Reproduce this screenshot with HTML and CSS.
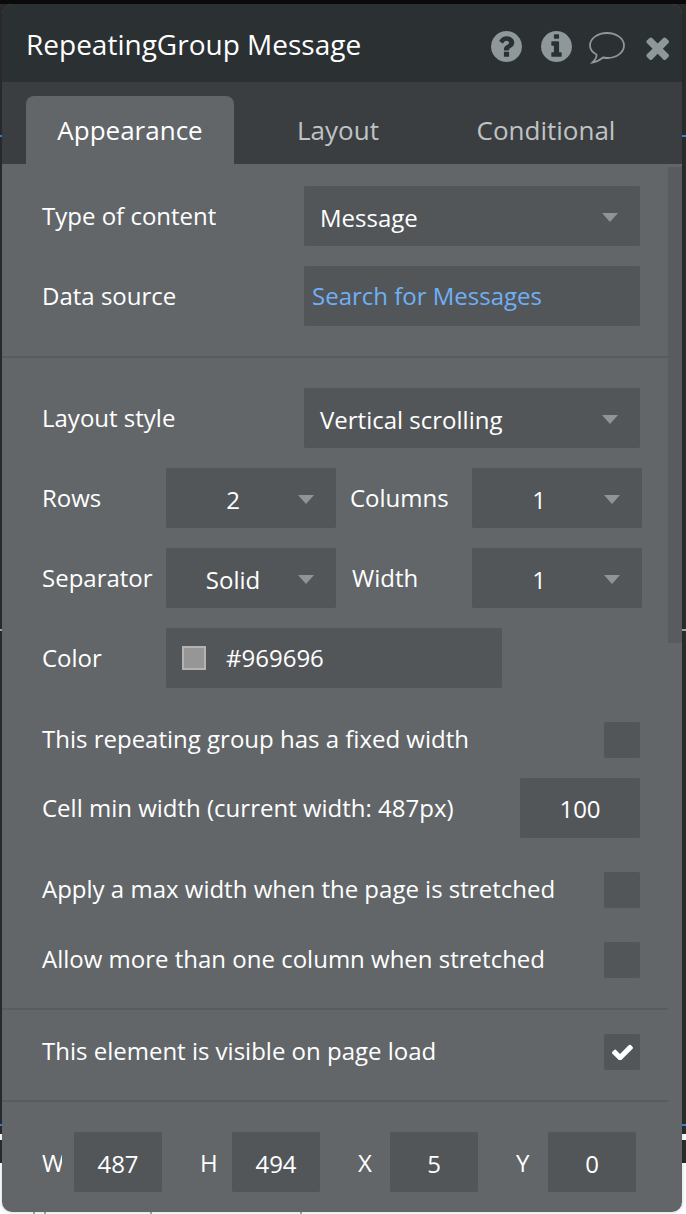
FILE: index.html
```html
<!DOCTYPE html>
<html lang="en">
  <head>
    <meta charset="UTF-8" />
    <meta name="viewport" content="width=device-width, initial-scale=1.0" />
    <title>RepeatingGroup Message</title>
    <link rel="stylesheet" href="styles.css">
  </head>
  <body>
    <div class="panel">
      <div class="panel-header">
        <h1>RepeatingGroup Message</h1>
        <div class="header-icons">
          <svg class="icon-round" viewBox="128 128 1536 1536"><path d="M1024 1376v-192q0-14-9-23t-23-9h-192q-14 0-23 9t-9 23v192q0 14 9 23t23 9h192q14 0 23-9t9-23zm256-672q0-88-55.5-163t-138.5-116-170-41q-243 0-371 213-15 24 8 42l132 100q7 6 19 6 16 0 25-12 53-68 86-92 34-24 86-24 48 0 85.5 26t37.5 59q0 38-20 61t-68 45q-63 28-115.5 86.5t-52.5 125.5v36q0 14 9 23t23 9h192q14 0 23-9t9-23q0-19 21.5-49.5t54.5-49.5q32-18 49-28.5t46-35 44.5-48 28-60.5 12.5-81zm384 192q0 209-103 385.5t-279.5 279.5-385.5 103-385.5-103-279.5-279.5-103-385.5 103-385.5 279.5-279.5 385.5-103 385.5 103 279.5 279.5 103 385.5z"/></svg>
          <svg class="icon-round" viewBox="128 128 1536 1536"><path d="M1152 1376v-160q0-14-9-23t-23-9h-96v-512q0-14-9-23t-23-9h-320q-14 0-23 9t-9 23v160q0 14 9 23t23 9h96v320h-96q-14 0-23 9t-9 23v160q0 14 9 23t23 9h448q14 0 23-9t9-23zm-128-896v-160q0-14-9-23t-23-9h-192q-14 0-23 9t-9 23v160q0 14 9 23t23 9h192q14 0 23-9t9-23zm640 416q0 209-103 385.5t-279.5 279.5-385.5 103-385.5-103-279.5-279.5-103-385.5 103-385.5 279.5-279.5 385.5-103 385.5 103 279.5 279.5 103 385.5z"/></svg>
          <svg class="icon-bubble" viewBox="0 0 36 32"><path d="M7.5 22.5C8 25 6 28 3.5 30.5 7.5 30 11 28 14 25.5 15.5 25.8 17 26 18.5 26 27.5 26 35 20.5 35 13.5 35 6.5 27.5 1 18 1 8.5 1 1 6.5 1 13.5 1 17.2 3.5 20.5 7.5 22.5Z"/></svg>
          <svg class="icon-close" viewBox="176 240 1314 1314"><path d="M1490 1322q0 40-28 68l-136 136q-28 28-68 28t-68-28l-294-294-294 294q-28 28-68 28t-68-28l-136-136q-28-28-28-68t28-68l294-294-294-294q-28-28-28-68t28-68l136-136q28-28 68-28t68 28l294 294 294-294q28-28 68-28t68 28l136 136q28 28 28 68t-28 68l-294 294 294 294q28 28 28 68z"/></svg>
        </div>
      </div>

      <div class="tabs">
        <div class="tab active">Appearance</div>
        <div class="tab">Layout</div>
        <div class="tab">Conditional</div>
      </div>

      <div class="panel-body">
        <div class="scrollbar"></div>

        <div class="section section-content">
          <div class="row row-wide">
            <label>Type of content</label>
            <div class="field select"><span>Message</span></div>
          </div>
          <div class="row row-wide">
            <label>Data source</label>
            <div class="field link">Search for Messages</div>
          </div>
        </div>

        <div class="section section-layout">
          <div class="row row-wide">
            <label>Layout style</label>
            <div class="field select"><span>Vertical scrolling</span></div>
          </div>
          <div class="row row-split">
            <label>Rows</label>
            <div class="field select centered"><span>2</span></div>
            <label class="label-columns">Columns</label>
            <div class="field select centered"><span>1</span></div>
          </div>
          <div class="row row-split">
            <label>Separator</label>
            <div class="field select centered"><span>Solid</span></div>
            <label class="label-width">Width</label>
            <div class="field select centered"><span>1</span></div>
          </div>
          <div class="row row-color">
            <label>Color</label>
            <div class="field color-field">
              <span class="swatch"></span>
              <span>#969696</span>
            </div>
          </div>
          <div class="check-row first">
            <label>This repeating group has a fixed width</label>
            <span class="checkbox"></span>
          </div>
          <div class="row row-min">
            <label>Cell min width (current width: 487px)</label>
            <div class="field number">100</div>
          </div>
          <div class="check-row stretched">
            <label>Apply a max width when the page is stretched</label>
            <span class="checkbox"></span>
          </div>
          <div class="check-row allow">
            <label>Allow more than one column when stretched</label>
            <span class="checkbox"></span>
          </div>
        </div>

        <div class="section section-visible">
          <div class="check-row">
            <label>This element is visible on page load</label>
            <span class="checkbox">
              <svg viewBox="121 300 1550 1150"><path d="M1671 566q0 40-28 68l-724 724-136 136q-28 28-68 28t-68-28l-136-136-362-362q-28-28-28-68t28-68l136-136q28-28 68-28t68 28l294 295 656-657q28-28 68-28t68 28l136 136q28 28 28 68z"/></svg>
            </span>
          </div>
        </div>

        <div class="section-size">
          <label>W</label><div class="field number">487</div>
          <label>H</label><div class="field number">494</div>
          <label>X</label><div class="field number">5</div>
          <label>Y</label><div class="field number">0</div>
        </div>
      </div>
    </div>
  </body>
</html>
```

FILE: styles.css
```css
body {
  margin: 0;
  width: 686px;
  height: 1214px;
  padding: 4px 4px 2px 2px;
  box-sizing: border-box;
  overflow: hidden;
  font-family: "Open Sans", sans-serif;
  /* the editor page showing around the panel */
  background-color: #fff;
  background-image:
    linear-gradient(#0b0b0b, #0b0b0b),
    linear-gradient(#3d88d8, #3d88d8),
    linear-gradient(#aaa, #aaa),
    linear-gradient(#3d88d8, #3d88d8),
    linear-gradient(#2c2c2c, #2c2c2c),
    linear-gradient(#2c2c2c, #2c2c2c),
    linear-gradient(#2c2c2c, #2c2c2c),
    linear-gradient(#aaa, #aaa),
    linear-gradient(#aaa, #aaa),
    linear-gradient(#aaa, #aaa),
    linear-gradient(#aaa, #aaa);
  background-size:
    100% 4px,
    100% 2px,
    100% 2px,
    100% 2px,
    100% 1124px,
    100% 8px,
    100% 23px,
    2px 2px,
    2px 2px,
    2px 2px,
    2px 2px;
  background-position:
    0 0,
    0 135px,
    0 629px,
    0 1124px,
    0 0,
    0 1126px,
    0 1140px,
    33px 1212px,
    44px 1212px,
    150px 1212px,
    300px 1212px;
  background-repeat: no-repeat;
}
.panel {
  height: 1208px;
  display: flex;
  flex-direction: column;
  border-radius: 10px;
  overflow: hidden;
  background-color: #626669;
  box-shadow: 0 0 4px rgba(0, 0, 0, 0.2);
}
.panel-header {
  height: 78px;
  flex: none;
  display: flex;
  align-items: center;
  justify-content: space-between;
  padding: 0 13px 0 24px;
  background-color: #2b3033;
}
.panel-header h1 {
  margin: 1px 0 0;
  font-size: 28px;
  font-weight: 400;
  color: #fff;
}
.header-icons {
  display: flex;
  align-items: center;
  padding-top: 6px;
}
.header-icons svg {
  fill: #8e979a;
}
.icon-round {
  width: 31px;
  height: 31px;
  margin-right: 19px;
}
.header-icons .icon-bubble {
  width: 36px;
  height: 32px;
  margin: 4px 19px 0 -2px;
  fill: none;
  stroke: #8e979a;
  stroke-width: 1.8;
}
.icon-close {
  width: 25px;
  height: 25px;
  margin-top: 3px;
}
.tabs {
  height: 82px;
  flex: none;
  display: flex;
  align-items: flex-end;
  padding-left: 24px;
  background-color: #3a3e41;
}
.tab {
  width: 208px;
  height: 68px;
  line-height: 68px;
  text-align: center;
  font-size: 26px;
  color: #c0c3c4;
}
.tab.active {
  color: #fff;
  background-color: #626669;
  border-radius: 8px 8px 0 0;
}
.panel-body {
  position: relative;
  flex: 1;
}
.scrollbar {
  position: absolute;
  top: 3px;
  right: 0;
  width: 14px;
  height: 476px;
  background-color: #585c5f;
}
.section {
  margin-right: 14px;
  padding: 0 0 30px 40px;
  border-bottom: 2px solid #585c5f;
}
.section-content {
  padding-top: 22px;
}
.section-layout {
  padding-top: 30px;
}
.section-visible {
  padding-top: 24px;
}
label {
  font-size: 24px;
  color: #fff;
  margin-top: -2px;
}
.check-row label {
  margin-top: -4px;
}
.row {
  display: grid;
  align-items: center;
  height: 60px;
  margin-bottom: 20px;
}
.section-content .row:last-child {
  margin-bottom: 0;
}
.row-wide {
  grid-template-columns: 262px 336px;
}
.row-split {
  grid-template-columns: 124px 170px 136px 170px;
}
.row-color {
  grid-template-columns: 124px 336px;
  margin-bottom: 34px;
}
.row-min {
  grid-template-columns: 478px 120px;
  margin-bottom: 34px;
}
.label-columns {
  padding-left: 14px;
}
.label-width {
  padding-left: 16px;
}
.field {
  height: 60px;
  line-height: 64px;
  box-sizing: border-box;
  border-radius: 2px;
  font-size: 24px;
  color: #fff;
  background-color: #535659;
}
.select {
  position: relative;
  padding-left: 16px;
}
.select::after {
  content: "";
  position: absolute;
  top: 27px;
  right: 22px;
  border-left: 8px solid transparent;
  border-right: 8px solid transparent;
  border-top: 9px solid #8f9497;
}
.select.centered {
  padding: 0 36px 0 0;
  text-align: center;
}
.link {
  padding-left: 8px;
  line-height: 60px;
  color: #6fb0f5;
}
.color-field {
  display: flex;
  align-items: center;
  gap: 20px;
  padding-left: 16px;
  line-height: 60px;
}
.swatch {
  width: 24px;
  height: 24px;
  box-sizing: border-box;
  border: 2px solid #b3b3b3;
  background-color: #969696;
}
.number {
  width: 88px;
  text-align: center;
}
.row-min .number {
  width: 120px;
  line-height: 62px;
}
.check-row {
  display: flex;
  align-items: center;
  justify-content: space-between;
  width: 598px;
  height: 36px;
}
.check-row.stretched {
  margin-top: 34px;
}
.check-row.allow {
  margin-top: 34px;
}
.check-row.first {
  margin-bottom: 20px;
}
.checkbox {
  width: 36px;
  height: 36px;
  display: flex;
  align-items: center;
  justify-content: center;
  border-radius: 2px;
  background-color: #535659;
}
.checkbox svg {
  width: 21px;
  height: 16px;
  fill: #fff;
}
.section-size {
  display: flex;
  align-items: center;
  padding: 30px 0 0 40px;
}
.section-size label {
  width: 20px;
  margin: 0 12px 0 0;
  overflow: hidden;
}
.section-size .number {
  margin-right: 38px;
}
```
